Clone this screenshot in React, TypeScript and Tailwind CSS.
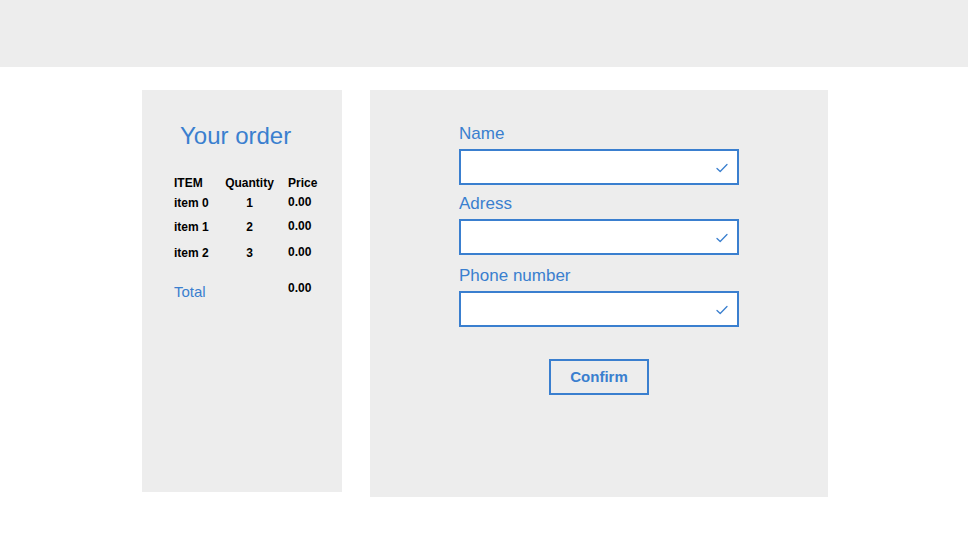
import React from "react";

const blue = "text-[#3a7fcf]";

const rows = [
  { item: "item 0", qty: 1, price: "0.00", h: "h-[22px]" },
  { item: "item 1", qty: 2, price: "0.00", h: "h-[26px]" },
  { item: "item 2", qty: 3, price: "0.00", h: "h-[26px]" },
];

const Check = () => (
  <svg width="12" height="10" viewBox="0 0 12 10" fill="none">
    <path d="M1 5.5 L4.2 8.5 L11 1.5" stroke="#3a7fcf" strokeWidth="1.3" strokeLinecap="round" strokeLinejoin="round" />
  </svg>
);

const Field = ({ label, labelClass }: { label: string; labelClass: string }) => (
  <div className="flex flex-col">
    <label className={`text-[17px] leading-[20px] ${blue} ${labelClass}`}>{label}</label>
    <div className="relative w-[280px] h-[36px] mt-[5px] bg-white border-2 border-[#3a7fcf]">
      <input className="w-full h-full outline-none bg-transparent px-2" />
      <span className="absolute right-[9px] top-[12px]">
        <Check />
      </span>
    </div>
  </div>
);

export default function App() {
  return (
    <div className="w-[968px] h-[544px] bg-white font-['Liberation_Sans',Arial,sans-serif]">
      <header className="h-[67px] bg-[#ededed]" />
      <main className="flex justify-center gap-[28px] pt-[23px] pl-[2px]">
        {/* Order summary */}
        <section className="w-[200px] h-[402px] bg-[#ededed] pl-[32px]">
          <h1 className={`text-[24px] leading-[28px] mt-[32px] ml-[6px] ${blue}`}>Your order</h1>
          <table className="mt-[24px] text-[12px] font-bold text-black border-collapse">
            <thead>
              <tr className="h-[18px]">
                <th className="w-[51px] text-left font-bold p-0">ITEM</th>
                <th className="w-[49px] text-center font-bold p-0">Quantity</th>
                <th className="text-left font-bold p-0 pl-[14px]">Price</th>
              </tr>
            </thead>
            <tbody>
              {rows.map((r) => (
                <tr key={r.item} className={r.h}>
                  <td className="p-0 align-middle">{r.item}</td>
                  <td className="p-0 text-center align-middle">{r.qty}</td>
                  <td className="p-0 pl-[14px] align-middle relative -top-[1px]">{r.price}</td>
                </tr>
              ))}
            </tbody>
          </table>
          <div className="flex mt-[17px]">
            <span className={`w-[114px] text-[15px] leading-[18px] font-normal ${blue}`}>Total</span>
            <span className="text-[12px] font-bold text-black -mt-[4px]">0.00</span>
          </div>
        </section>

        {/* Checkout form */}
        <section className="w-[458px] h-[407px] bg-[#ededed] flex flex-col items-center pt-[34px]">
          <div className="flex flex-col">
            <Field label="Name" labelClass="" />
            <Field label="Adress" labelClass="mt-[9px]" />
            <Field label="Phone number" labelClass="mt-[11px]" />
          </div>
          <button className={`mt-[32px] w-[100px] h-[36px] border-2 border-[#3a7fcf] text-[15px] font-bold ${blue} bg-transparent`}>
            Confirm
          </button>
        </section>
      </main>
    </div>
  );
}
